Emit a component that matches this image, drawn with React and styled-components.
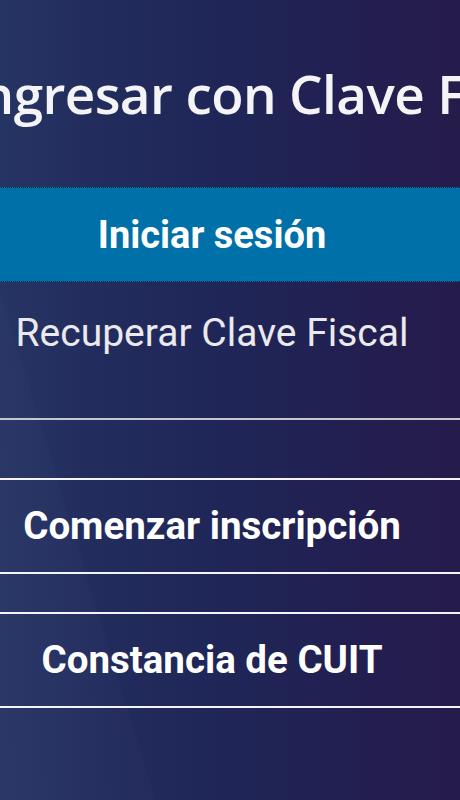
import React from "react";
import styled, { createGlobalStyle } from "styled-components";

const Global = createGlobalStyle`
  html, body {
    margin: 0;
    padding: 0;
  }
  body {
    width: 460px;
    min-height: 800px;
    overflow: hidden;
    background: linear-gradient(90deg, #263464 0%, #212b5c 25%, #1f2657 50%, #221f51 75%, #261c4c 100%);
    font-family: Roboto, "Liberation Sans", sans-serif;
  }
`;

const Page = styled.main`
  width: 460px;
  height: 800px;
  overflow: hidden;
  background: linear-gradient(
    73deg,
    rgba(255, 255, 255, 0.022) 0px,
    rgba(255, 255, 255, 0.015) 147px,
    rgba(255, 255, 255, 0) 150px
  );
`;

const Title = styled.h1`
  margin: 0 0 0 -35px;
  padding-top: 67px;
  font-family: "Open Sans", "Noto Sans", sans-serif;
  font-weight: 600;
  font-size: 53px;
  line-height: 1;
  color: #f4f4f6;
  white-space: nowrap;
  letter-spacing: -0.6px;
`;

const Panel = styled.div`
  display: flex;
  flex-direction: column;
  width: 496px;
  margin-left: -36px;
  padding-top: 67px;
`;

const PrimaryButton = styled.button`
  display: flex;
  align-items: center;
  justify-content: center;
  height: 95px;
  margin: 0;
  padding: 0;
  border: none;
  border-top: 1px dotted #14203f;
  border-bottom: 1px dotted #14203f;
  background: #0070a8;
  color: #ffffff;
  font-family: Roboto, "Liberation Sans", sans-serif;
  font-weight: 700;
  font-size: 38px;
  line-height: 1;
`;

const LinkRow = styled.a`
  display: block;
  padding: 32px 0 65px;
  text-align: center;
  color: #e9e9ee;
  font-family: Roboto, "Liberation Sans", sans-serif;
  font-weight: 400;
  font-size: 39px;
  line-height: 1;
  text-decoration: none;
`;

const Rule = styled.hr`
  margin: 0 0 58px;
  border: none;
  height: 2px;
  background: #c6c6cc;
`;

const OutlineButton = styled.button`
  display: flex;
  align-items: center;
  justify-content: center;
  height: 96px;
  margin: 0 0 ${(p) => p.$gap || 0}px;
  padding: 0;
  border: none;
  border-top: 2px solid #f4f4f6;
  border-bottom: 2px solid #f4f4f6;
  background: transparent;
  color: #ffffff;
  font-family: Roboto, "Liberation Sans", sans-serif;
  font-weight: 700;
  font-size: 38.5px;
  line-height: 1;
`;

export default function App() {
  return (
    <>
      <Global />
      <Page>
        <Title>Ingresar con Clave Fiscal</Title>
        <Panel>
          <PrimaryButton>Iniciar sesión</PrimaryButton>
          <LinkRow href="#">Recuperar Clave Fiscal</LinkRow>
          <Rule />
          <OutlineButton $gap={38}>Comenzar inscripción</OutlineButton>
          <OutlineButton>Constancia de CUIT</OutlineButton>
        </Panel>
      </Page>
    </>
  );
}
